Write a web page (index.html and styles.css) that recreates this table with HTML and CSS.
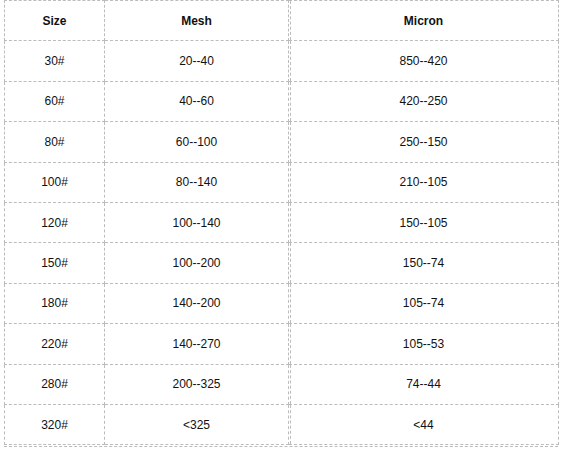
FILE: index.html
```html
<!DOCTYPE html>
<html>
<head>
<meta charset="utf-8">
<link rel="stylesheet" href="styles.css">
</head>
<body>
<div class="wrap">
<table class="spec">
  <colgroup>
    <col class="c1"><col class="c2"><col class="c3">
  </colgroup>
  <thead>
    <tr><th>Size</th><th>Mesh</th><th class="last">Micron</th></tr>
  </thead>
  <tbody>
    <tr><td>30#</td><td>20--40</td><td class="last">850--420</td></tr>
    <tr><td>60#</td><td>40--60</td><td class="last">420--250</td></tr>
    <tr><td>80#</td><td>60--100</td><td class="last">250--150</td></tr>
    <tr><td>100#</td><td>80--140</td><td class="last">210--105</td></tr>
    <tr><td>120#</td><td>100--140</td><td class="last">150--105</td></tr>
    <tr><td>150#</td><td>100--200</td><td class="last">150--74</td></tr>
    <tr><td>180#</td><td>140--200</td><td class="last">105--74</td></tr>
    <tr><td>220#</td><td>140--270</td><td class="last">105--53</td></tr>
    <tr><td>280#</td><td>200--325</td><td class="last">74--44</td></tr>
    <tr><td>320#</td><td>&lt;325</td><td class="last">&lt;44</td></tr>
  </tbody>
</table>
<div class="underline"></div>
</div>
</body>
</html>
```
FILE: styles.css
```css
html, body {
  margin: 0;
  padding: 0;
  background: #fff;
}
.wrap {
  padding: 0 7px 0 4px;
}
.spec {
  width: 554px;
  border-collapse: collapse;
  table-layout: fixed;
  font-family: "Liberation Sans", Arial, sans-serif;
  font-size: 12px;
  color: #111;
}
.c1 { width: 100px; }
.c2 { width: 184px; }
.c3 { width: 270px; }
.spec th, .spec td {
  border: 1px dashed #bcbcbc;
  height: 39.4px;
  padding: 0;
  text-align: center;
  vertical-align: middle;
}
.spec th {
  font-weight: bold;
}
.spec .last {
  position: relative;
}
.spec .last::before {
  content: "";
  position: absolute;
  top: 0;
  bottom: 0;
  left: 1px;
  border-left: 1px dashed #bcbcbc;
}
.underline {
  width: 554px;
  margin-top: 1px;
  border-top: 1px dashed #bcbcbc;
}
```
